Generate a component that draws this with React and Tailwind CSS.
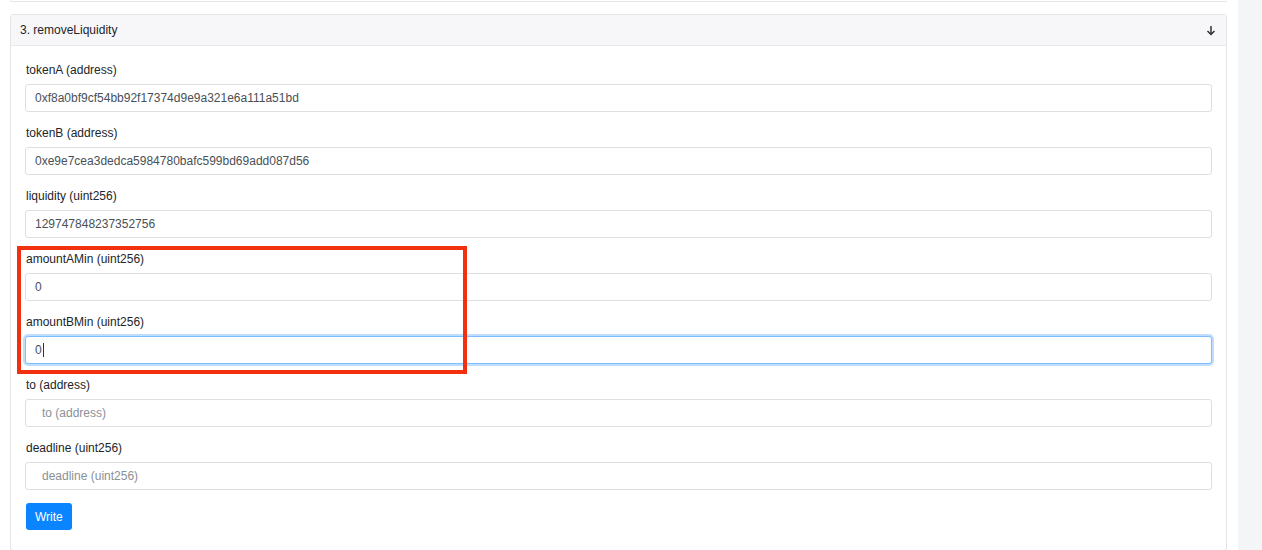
const fields = [
  { label: "tokenA (address)", value: "0xf8a0bf9cf54bb92f17374d9e9a321e6a111a51bd" },
  { label: "tokenB (address)", value: "0xe9e7cea3dedca5984780bafc599bd69add087d56" },
  { label: "liquidity (uint256)", value: "129747848237352756" },
];

const Field = ({ label, value, placeholder, focused }) => (
  <div className="flex flex-col">
    <label className="text-[12px] leading-[15px] text-[#212529] pl-px">{label}</label>
    <div
      className={
        "mt-[6px] h-[28px] flex items-center rounded-[3px] border bg-white text-[12px] " +
        (focused
          ? "border-[#80bdff] shadow-[0_0_0_2px_rgba(0,123,255,0.25)]"
          : "border-[#dcdfe3]")
      }
    >
      {placeholder ? (
        <span className="pl-[16px] text-[#8a9096]">{placeholder}</span>
      ) : (
        <span className="pl-[9px] text-[#495057] flex items-center">
          {value}
          {focused && <span className="ml-px inline-block w-px h-[14px] bg-[#333]" />}
        </span>
      )}
    </div>
  </div>
);

export default function App() {
  return (
    <div
      className="flex h-[550px] overflow-hidden bg-white"
      style={{ fontFamily: '"Liberation Sans", Arial, sans-serif' }}
    >
      <div className="w-[1238px] shrink-0 pl-[10px] pr-[11px]">
        <div className="h-[2px] border-b border-x border-[#e3e5e8] rounded-b-[3px]" />
        <div className="mt-[12px] border border-[#e3e5e8] rounded-[3px]">
          <div className="h-[31px] flex items-center justify-between bg-[#f7f7f9] border-b border-[#e8e9ec] pl-[9px] pr-[10px]">
            <span className="text-[12px] text-[#212529]">3. removeLiquidity</span>
            <svg width="10" height="11" viewBox="0 0 10 11" fill="none" stroke="#333" strokeWidth="1.5">
              <path d="M5 1v8.5M1.5 6L5 9.5 8.5 6" />
            </svg>
          </div>
          <div className="pl-[14px] pr-[14px] pt-[17px] pb-[20px] flex flex-col gap-[14px]">
            {fields.map((f) => (
              <Field key={f.label} {...f} />
            ))}
            <div className="relative flex flex-col gap-[14px]">
              <div className="absolute left-[-8px] top-[-6px] w-[450px] h-[128px] border-[4px] border-[#f2300f] pointer-events-none z-10" />
              <Field label="amountAMin (uint256)" value="0" />
              <Field label="amountBMin (uint256)" value="0" focused />
            </div>
            <Field label="to (address)" placeholder="to (address)" />
            <Field label="deadline (uint256)" placeholder="deadline (uint256)" />
            <div className="-mt-[1px]">
              <button className="h-[27px] px-[9px] ml-px rounded-[3px] bg-[#0a84ff] text-white text-[12px]">
                Write
              </button>
            </div>
          </div>
        </div>
      </div>
      <div className="flex-1 bg-[#f4f5f7]" />
    </div>
  );
}
